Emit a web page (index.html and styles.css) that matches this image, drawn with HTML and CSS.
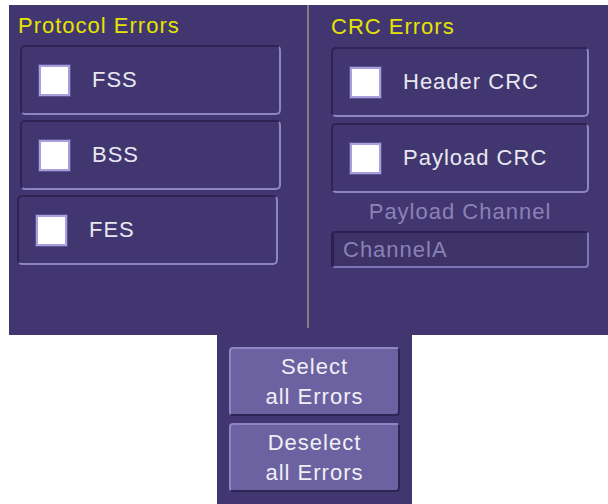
FILE: index.html
```html
<!DOCTYPE html>
<html>
<head>
  <meta charset="utf-8">
  <title>Error Filter</title>
  <link rel="stylesheet" href="styles.css">
</head>
<body>
  <div id="error-panel">
    <div class="column left">
      <h2 class="title">Protocol Errors</h2>
      <div class="options">
        <label class="option"><span class="check"></span>FSS</label>
        <label class="option"><span class="check"></span>BSS</label>
        <label class="option shifted"><span class="check"></span>FES</label>
      </div>
    </div>
    <div class="divider"></div>
    <div class="column right">
      <h2 class="title">CRC Errors</h2>
      <div class="options">
        <label class="option"><span class="check"></span>Header CRC</label>
        <label class="option"><span class="check"></span>Payload CRC</label>
      </div>
      <div class="field-label">Payload Channel</div>
      <div class="field">ChannelA</div>
    </div>
  </div>

  <div id="action-panel">
    <button class="action">Select<br>all Errors</button>
    <button class="action">Deselect<br>all Errors</button>
  </div>
</body>
</html>
```

FILE: styles.css
```css
body {
  margin: 0;
  background-color: #fff;
  font-family: "Liberation Sans", Arial, sans-serif;
  font-size: 22px;
  letter-spacing: 1px;
}

#error-panel {
  display: flex;
  margin: 5px 0 0 9px;
  width: 599px;
  height: 330px;
  background-color: #423670;
}

.column {
  padding-top: 8px;
}

.column.left {
  width: 298px;
}

.column.right {
  flex: 1;
  padding-left: 22px;
}

.title {
  margin: 0 0 6px 9px;
  font-size: 22px;
  font-weight: normal;
  line-height: 26px;
  color: #e4e400;
}

.right .title {
  margin: 1px 0 7px 0;
}

.divider {
  width: 2px;
  height: 323px;
  background-color: #807e88;
}

.options {
  display: flex;
  flex-direction: column;
  gap: 5px;
  margin-left: 11px;
}

.right .options {
  gap: 6px;
  margin-left: 0;
}

.option {
  display: flex;
  align-items: center;
  box-sizing: border-box;
  width: 261px;
  height: 70px;
  padding-left: 17px;
  border: 2px solid;
  border-color: #2d2453 #8d85c4 #8d85c4 #2d2453;
  border-radius: 5px;
  color: #e8e8f0;
  line-height: 26px;
}

.option.shifted {
  margin-left: -3px;
}

.right .option {
  width: 258px;
}

.check {
  width: 27px;
  height: 27px;
  margin-right: 22px;
  background-color: #fff;
  border: 2px solid #a8a0dc;
  box-shadow: 0 0 0 1px #5b5090;
}

.field-label {
  width: 258px;
  margin-top: 6px;
  text-align: center;
  line-height: 26px;
  color: #8a82b6;
}

.field {
  box-sizing: border-box;
  width: 258px;
  height: 37px;
  margin-top: 6px;
  padding-left: 9px;
  border: 2px solid;
  border-left-width: 3px;
  border-color: #2a2150 #7d75b6 #7d75b6 #2a2150;
  border-radius: 4px;
  background-color: #3e3369;
  color: #8a82b6;
  line-height: 33px;
}

#action-panel {
  display: flex;
  flex-direction: column;
  gap: 7px;
  box-sizing: border-box;
  margin-left: 217px;
  width: 195px;
  height: 169px;
  padding: 12px 0 0 12px;
  background-color: #423670;
}

.action {
  box-sizing: border-box;
  width: 171px;
  height: 69px;
  padding: 0;
  border: 2px solid;
  border-color: #8e86c4 #2e2556 #2e2556 #8e86c4;
  border-radius: 4px;
  background-color: #6c62a2;
  color: #f0f0f4;
  font-family: "Liberation Sans", Arial, sans-serif;
  font-size: 22px;
  letter-spacing: 1px;
  line-height: 30px;
}
```
